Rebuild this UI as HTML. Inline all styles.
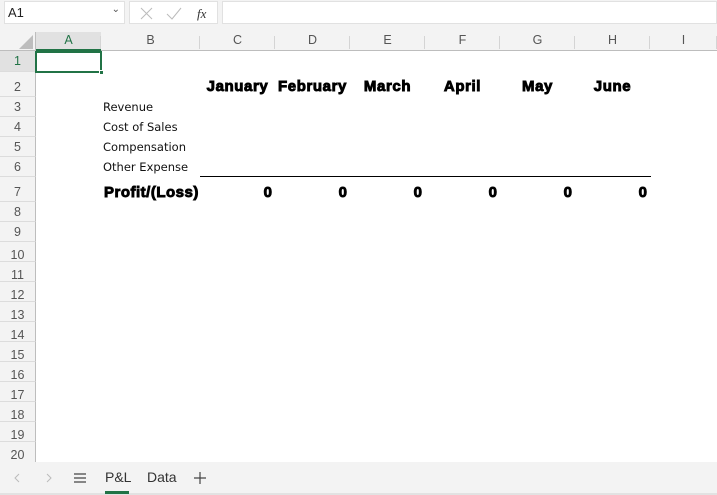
<!DOCTYPE html>
<html><head><style>
*{margin:0;padding:0;box-sizing:border-box}
body{width:717px;height:495px;overflow:hidden;background:#fff;font-family:"Liberation Sans",sans-serif;position:relative}
.a{position:absolute}
.top{left:0;top:0;width:717px;height:32px;background:#f3f3f3}
.box{position:absolute;background:#fff;border:1px solid #e1e1e1}
.ch{position:absolute;top:32px;height:19px;background:#f3f3f3;border-bottom:1px solid #bdbdbd;font-size:12.5px;color:#555;text-align:center;line-height:17px}
.ch span{position:absolute;right:0;top:4px;height:13px;border-right:1px solid #d4d4d4}
.rh{position:absolute;left:0;width:36px;background:#f3f3f3;border-right:1px solid #bdbdbd;border-bottom:1px solid #dcdcdc;font-size:12.5px;color:#555;text-align:center}
.t{position:absolute;color:#111;font-family:"DejaVu Sans","Liberation Sans",sans-serif;font-size:11.5px}
.m{position:absolute;font-weight:bold;font-size:15px;text-align:center;width:75px;color:#000;-webkit-text-stroke:0.9px #000;letter-spacing:0.6px}
.z{position:absolute;font-weight:bold;font-size:15px;text-align:right;width:75px;color:#000;-webkit-text-stroke:0.9px #000;padding-right:3px}
</style></head><body>
<div class="a top"></div>
<div class="box" style="left:4px;top:1px;width:121px;height:23px"><span style="position:absolute;left:3px;top:3px;font-size:13px;color:#222">A1</span><span style="position:absolute;right:4px;top:2px;font-size:10px;color:#555">⌄</span></div>
<div class="box" style="left:129px;top:1px;width:89px;height:23px">
<svg width="89" height="23" style="position:absolute;left:0;top:0"><path d="M11 6l11 11M22 6L11 17" stroke="#bbb" stroke-width="1" fill="none"/><path d="M37 12l5 5 9-11" stroke="#bbb" stroke-width="1" fill="none"/><text x="67" y="16" font-family="Liberation Serif" font-style="italic" font-size="13" fill="#333">fx</text></svg></div>
<div class="box" style="left:222px;top:1px;width:495px;height:23px"></div>
<div class="a" style="left:0;top:32px;width:36px;height:19px;background:#f3f3f3;border-right:1px solid #bdbdbd;border-bottom:1px solid #bdbdbd"><svg width="36" height="19" class="a"><path d="M33 3V17H19Z" fill="#bdbdbd"/></svg></div>
<div class="ch" style="left:36px;width:65px;background:#e1e1e1;color:#217346;border-bottom:2px solid #217346">A<span></span></div>
<div class="ch" style="left:101px;width:99px">B<span></span></div>
<div class="ch" style="left:200px;width:75px">C<span></span></div>
<div class="ch" style="left:275px;width:75px">D<span></span></div>
<div class="ch" style="left:350px;width:75px">E<span></span></div>
<div class="ch" style="left:425px;width:75px">F<span></span></div>
<div class="ch" style="left:500px;width:75px">G<span></span></div>
<div class="ch" style="left:575px;width:75px">H<span></span></div>
<div class="ch" style="left:650px;width:67px">I<span></span></div>
<div class="rh" style="top:51px;height:21px;line-height:21px;background:#e1e1e1;color:#217346">1</div>
<div class="rh" style="top:72px;height:25px;line-height:30px">2</div>
<div class="rh" style="top:97px;height:20px;line-height:20px">3</div>
<div class="rh" style="top:117px;height:20px;line-height:20px">4</div>
<div class="rh" style="top:137px;height:20px;line-height:20px">5</div>
<div class="rh" style="top:157px;height:20px;line-height:20px">6</div>
<div class="rh" style="top:177px;height:25px;line-height:30px">7</div>
<div class="rh" style="top:202px;height:20px;line-height:20px">8</div>
<div class="rh" style="top:222px;height:20px;line-height:20px">9</div>
<div class="rh" style="top:242px;height:20px;line-height:26px">10</div>
<div class="rh" style="top:262px;height:20px;line-height:26px">11</div>
<div class="rh" style="top:282px;height:20px;line-height:26px">12</div>
<div class="rh" style="top:302px;height:20px;line-height:26px">13</div>
<div class="rh" style="top:322px;height:20px;line-height:26px">14</div>
<div class="rh" style="top:342px;height:20px;line-height:26px">15</div>
<div class="rh" style="top:362px;height:20px;line-height:26px">16</div>
<div class="rh" style="top:382px;height:20px;line-height:26px">17</div>
<div class="rh" style="top:402px;height:20px;line-height:26px">18</div>
<div class="rh" style="top:422px;height:20px;line-height:26px">19</div>
<div class="rh" style="top:442px;height:20px;line-height:26px;border-bottom:none">20</div>
<div class="a" style="left:35px;top:51px;width:67px;height:22px;border:2px solid #217346"></div>
<div class="a" style="left:99px;top:70px;width:5px;height:5px;background:#217346;border:1px solid #fff"></div>
<div class="m" style="left:195px;top:78px;width:85px">January</div>
<div class="m" style="left:270px;top:78px;width:85px">February</div>
<div class="m" style="left:350px;top:78px">March</div>
<div class="m" style="left:425px;top:78px">April</div>
<div class="m" style="left:500px;top:78px">May</div>
<div class="m" style="left:575px;top:78px">June</div>
<div class="t" style="left:103px;top:100px">Revenue</div>
<div class="t" style="left:103px;top:120px">Cost of Sales</div>
<div class="t" style="left:103px;top:140px">Compensation</div>
<div class="t" style="left:103px;top:160px">Other Expense</div>
<div class="a" style="left:200px;top:176px;width:451px;height:1px;background:#000"></div>
<div class="a" style="left:104px;top:184px;font-weight:bold;font-size:15px;-webkit-text-stroke:0.9px #000;letter-spacing:0.5px">Profit/(Loss)</div>
<div class="z" style="left:200px;top:184px">0</div>
<div class="z" style="left:275px;top:184px">0</div>
<div class="z" style="left:350px;top:184px">0</div>
<div class="z" style="left:425px;top:184px">0</div>
<div class="z" style="left:500px;top:184px">0</div>
<div class="z" style="left:575px;top:184px">0</div>
<div class="a" style="left:0;top:462px;width:717px;height:33px;background:#f3f3f3;border-bottom:2px solid #e2e2e2">
<svg width="220" height="33" class="a"><path d="M19 12l-4 4 4 4M47 12l4 4-4 4" stroke="#bbb" fill="none"/><path d="M74 12h12M74 16h12M74 20h12" stroke="#444" stroke-width="1.2"/><path d="M200 10v12M194 16h12" stroke="#444" stroke-width="1.2"/></svg>
<div class="a" style="left:105px;top:7px;font-size:14px;color:#333">P&amp;L</div>
<div class="a" style="left:105px;top:29px;width:24px;height:3px;background:#217346"></div>
<div class="a" style="left:147px;top:7px;font-size:14px;color:#333">Data</div>
</div>
</body></html>
